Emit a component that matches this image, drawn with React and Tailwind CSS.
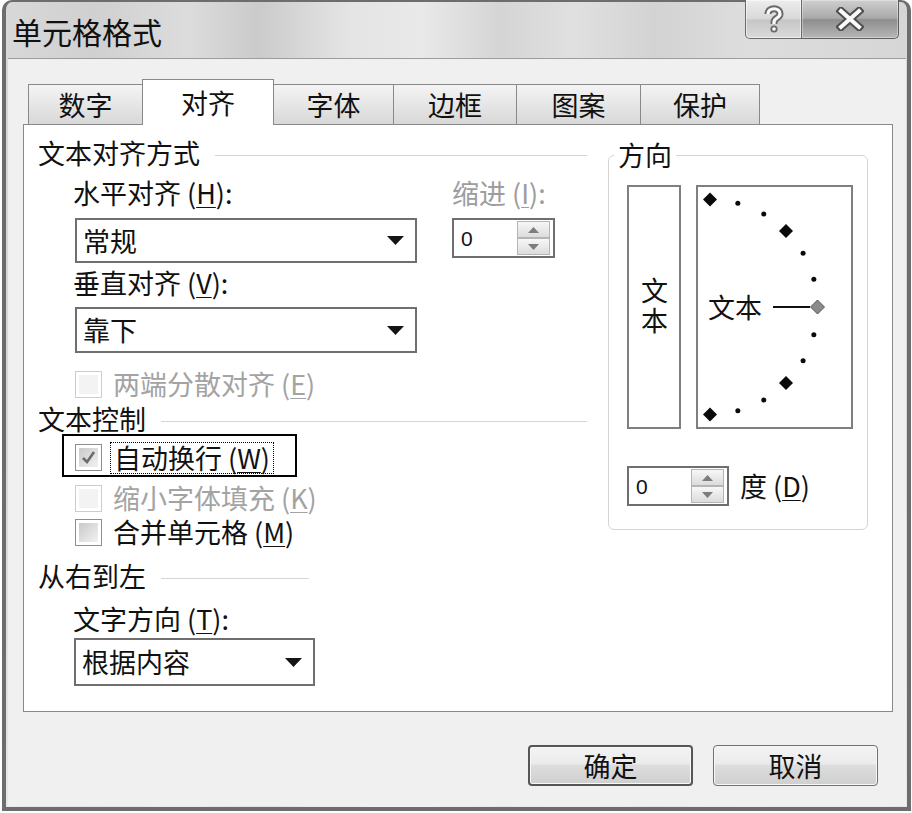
import React from 'react';

const TABS = [
  { label: '数字', w: 'w-[115px]' },
  { label: '对齐', w: 'w-[132px]', active: true },
  { label: '字体', w: 'w-[121px]' },
  { label: '边框', w: 'w-[124px]' },
  { label: '图案', w: 'w-[125px]' },
  { label: '保护', w: 'w-[120px]' },
];

// dial marks: every 15 degrees on a half circle
const CX = 14;
const CY = 122;
const R = 107.5;
const MARKS = [90, 75, 60, 45, 30, 15, 0, -15, -30, -45, -60, -75, -90].map((a) => {
  const rad = (a * Math.PI) / 180;
  return { a, x: CX + R * Math.cos(rad), y: CY - R * Math.sin(rad) };
});

function diamond(x, y, r) {
  return `${x},${y - r} ${x + r},${y} ${x},${y + r} ${x - r},${y}`;
}

function Acc({ k }) {
  return (
    <span className="ml-[6px]">
      (<span className="underline decoration-1 underline-offset-[3px]">{k}</span>)
    </span>
  );
}

function Heading({ text, line }) {
  return (
    <div className="flex h-[30px] items-center">
      <span>{text}</span>
      <span className={`ml-[15px] mt-[4px] h-px bg-[#d5d5d5] ${line}`} />
    </div>
  );
}

function Combo({ className, value }) {
  return (
    <div className={`flex items-center justify-between border-2 border-[#6f6f6f] bg-white pl-[6px] pr-[11px] ${className}`}>
      <span>{value}</span>
      <svg width="17" height="9" viewBox="0 0 17 9">
        <path d="M0 0H17L8.5 9Z" fill="#151515" />
      </svg>
    </div>
  );
}

function SpinBtn({ up }) {
  return (
    <div className="flex flex-1 items-center justify-center border border-[#b5b5b5] bg-[linear-gradient(#f7f7f7,#dcdcdc)]">
      <svg width="11" height="6" viewBox="0 0 11 6">
        <path d={up ? 'M0 6H11L5.5 0Z' : 'M0 0H11L5.5 6Z'} fill="#7d7d7d" />
      </svg>
    </div>
  );
}

function Spin({ className }) {
  return (
    <div className={`flex h-[40px] items-center justify-between border-2 border-[#6f6f6f] bg-white pl-[7px] pr-[3px] ${className}`}>
      <span className="font-['Liberation_Sans',sans-serif] text-[21px] leading-none">0</span>
      <div className="flex h-[34px] w-[33px] flex-col">
        <SpinBtn up />
        <SpinBtn />
      </div>
    </div>
  );
}

function Check({ checked, disabled }) {
  return (
    <span
      className={`flex h-[27px] w-[27px] shrink-0 items-center justify-center border bg-white p-[3px] ${
        disabled ? 'border-[#cdcdcd]' : 'border-[#8e8e8e]'
      }`}
    >
      <span
        className={`flex h-full w-full items-center justify-center ${
          disabled ? 'bg-[#f3f3f3]' : 'bg-[linear-gradient(135deg,#c9c9c9,#f2f2f2)]'
        }`}
      >
        {checked && (
          <svg width="17" height="17" viewBox="0 0 17 17">
            <path d="M3 9 L7 13 L14 3" fill="none" stroke="#6c6c6c" strokeWidth="2.6" />
          </svg>
        )}
      </span>
    </span>
  );
}

function App() {
  return (
    <div className="h-[813px] w-[912px] overflow-hidden bg-white font-['Noto_Sans_CJK_SC','Noto_Sans',sans-serif] text-[27px] leading-[30px] text-[#111]">
      {/* WINDOW FRAME */}
      <div className="ml-[2px] flex h-[811px] w-[909px] flex-col rounded-t-[10px] border-[4px] border-t-[2px] border-[#6d6d6d] bg-[linear-gradient(180deg,rgba(255,255,255,0)_55%,rgba(255,255,255,0.4)),linear-gradient(90deg,#d8d8d8,#d0d0d0_10%,#dcdcdc_20%,#cbcbcb_28%,#e4e4e4_38%,#e9e9e9_46%,#d5d5d5_55%,#e0e0e0_63%,#d3d3d3_72%,#dddddd_82%,#d6d6d6)]">
        {/* TITLE BAR */}
        <div className="flex h-[56px] shrink-0 items-start justify-between">
          <div className="pl-[6px] pt-[11px] text-[30px] leading-[36px]">单元格格式</div>
          <div className="mr-[8px] -mt-[2px] flex h-[39px]">
            <div className="flex w-[57px] items-center justify-center rounded-bl-[5px] border border-t-0 border-[#6a6a6a] bg-[linear-gradient(#ededed,#d8d8d8_50%,#c6c6c6_52%,#dadada)] shadow-[inset_0_0_0_1px_rgba(255,255,255,0.55)]">
              <svg width="22" height="28" viewBox="0 0 22 28">
                <path d="M5 9 C5 2 17 2 17 9 C17 13 11 13 11 17 V19" fill="none" stroke="#6a6a6a" strokeWidth="7" />
                <circle cx="11" cy="24" r="3.6" fill="#6a6a6a" />
                <path d="M5 9 C5 2 17 2 17 9 C17 13 11 13 11 17 V19" fill="none" stroke="#fafafa" strokeWidth="3.2" />
                <circle cx="11" cy="24" r="1.8" fill="#fafafa" />
              </svg>
            </div>
            <div className="flex w-[97px] items-center justify-center rounded-br-[5px] border border-l-0 border-t-0 border-[#5e5e5e] bg-[linear-gradient(#cfcfcf,#a9a9a9_48%,#8e8e8e_52%,#b6b6b6)] shadow-[inset_0_0_0_1px_rgba(255,255,255,0.35)]">
              <svg width="28" height="24" viewBox="0 0 28 24">
                <path d="M5 4 L23 20 M23 4 L5 20" stroke="#4f4f4f" strokeWidth="8" strokeLinecap="square" />
                <path d="M5 4 L23 20 M23 4 L5 20" stroke="#fafafa" strokeWidth="4" strokeLinecap="square" />
              </svg>
            </div>
          </div>
        </div>

        {/* DIALOG BODY */}
        <div className="mb-[1px] ml-[2px] mr-[1px] flex flex-1 flex-col border-t border-[#9c9c9c] bg-[#f0f0f0] pl-[15px] pr-[13px] pt-[20px]">
          {/* TABS */}
          <div className="flex h-[45px] items-end pl-[6px]">
            {TABS.map((t) =>
              t.active ? (
                <div
                  key={t.label}
                  className={`relative z-10 -mb-px -ml-px flex h-[46px] items-center justify-center border border-b-0 border-[#898989] bg-white ${t.w}`}
                >
                  {t.label}
                </div>
              ) : (
                <div
                  key={t.label}
                  className={`-ml-px flex h-[40px] items-center justify-center border border-b-0 border-[#898989] bg-[linear-gradient(#f4f4f4,#e6e6e6_50%,#d8d8d8)] ${t.w}`}
                >
                  {t.label}
                </div>
              )
            )}
          </div>

          {/* TAB PANEL */}
          <div className="flex h-[588px] border border-[#898989] bg-white pl-[14px] pt-[13px]">
            {/* left column */}
            <div className="flex w-[549px] flex-col">
              <Heading text="文本对齐方式" line="flex-1" />
              <div className="mt-[10px] flex h-[30px] items-center">
                <span className="ml-[35px] w-[379px]">
                  水平对齐<Acc k="H" />:
                </span>
                <span className="text-[#9d9d9d]">
                  缩进<Acc k="I" />:
                </span>
              </div>
              <div className="mt-[10px] flex items-start">
                <Combo className="ml-[37px] h-[45px] w-[342px]" value="常规" />
                <Spin className="ml-[35px] w-[103px]" />
              </div>
              <div className="mt-[5px] flex h-[30px] items-center">
                <span className="ml-[35px]">
                  垂直对齐<Acc k="V" />:
                </span>
              </div>
              <Combo className="ml-[37px] mt-[9px] h-[46px] w-[342px]" value="靠下" />
              <div className="mt-[16px] flex h-[30px] items-center pl-[37px] text-[#a3a3a3]">
                <Check disabled />
                <span className="ml-[11px]">
                  两端分散对齐<Acc k="E" />
                </span>
              </div>

              <div className="mt-[5px]">
                <Heading text="文本控制" line="flex-1" />
              </div>
              <div className="ml-[24px] flex h-[43px] w-[235px] items-center border-2 border-black pl-[11px] pt-[4px]">
                <Check checked />
                <span className="ml-[8px] h-[32px] border border-dotted border-black px-[3px] leading-[30px]">
                  自动换行<Acc k="W" />
                </span>
              </div>
              <div className="mt-[6px] flex h-[30px] items-center pl-[37px] text-[#a3a3a3]">
                <Check disabled />
                <span className="ml-[11px]">
                  缩小字体填充<Acc k="K" />
                </span>
              </div>
              <div className="mt-[4px] flex h-[30px] items-center pl-[37px]">
                <Check />
                <span className="ml-[11px]">
                  合并单元格<Acc k="M" />
                </span>
              </div>

              <div className="mt-[14px]">
                <Heading text="从右到左" line="w-[148px]" />
              </div>
              <div className="mt-[13px] flex h-[30px] items-center">
                <span className="ml-[35px]">
                  文字方向<Acc k="T" />:
                </span>
              </div>
              <Combo className="ml-[36px] mt-[4px] h-[48px] w-[241px]" value="根据内容" />
            </div>

            {/* orientation group */}
            <fieldset className="ml-[21px] mt-[2px] h-[390px] w-[260px] rounded-[6px] border border-[#d4d4d4]">
              <legend className="ml-[5px] px-[4px] leading-[30px]">方向</legend>
              <div className="mt-[15px] pl-[18px]">
                <div className="flex gap-[15px]">
                  <div className="flex h-[244px] w-[54px] items-center justify-center border-2 border-[#7f7f7f]">
                    <span className="tracking-[3px] [text-orientation:upright] [writing-mode:vertical-rl]">文本</span>
                  </div>
                  <div className="relative flex h-[244px] w-[157px] items-center border-2 border-[#7f7f7f] pl-[10px]">
                    <span>文本</span>
                    <svg className="absolute -left-[2px] -top-[2px]" width="157" height="244" viewBox="0 0 157 244">
                      <line x1="77" y1={CY} x2="114" y2={CY} stroke="#111" strokeWidth="2" />
                      {MARKS.map((m) =>
                        m.a === 0 ? (
                          <polygon key={m.a} points={diamond(m.x, m.y, 7)} fill="#8a8a8a" stroke="#555" strokeWidth="1" />
                        ) : Math.abs(m.a) === 90 || Math.abs(m.a) === 45 ? (
                          <polygon key={m.a} points={diamond(m.x, m.y, 7)} fill="#0a0a0a" />
                        ) : (
                          <circle key={m.a} cx={m.x} cy={m.y} r="2.5" fill="#0a0a0a" />
                        )
                      )}
                    </svg>
                  </div>
                </div>
                <div className="mt-[37px] flex items-center">
                  <Spin className="w-[102px]" />
                  <span className="ml-[11px]">
                    度<Acc k="D" />
                  </span>
                </div>
              </div>
            </fieldset>
          </div>

          {/* BUTTONS */}
          <div className="mt-[33px] flex justify-end gap-[20px] pr-[15px]">
            <button className="h-[41px] w-[165px] rounded-[4px] border-2 border-[#565656] bg-[linear-gradient(#f3f3f3,#ebebeb_45%,#dddddd_50%,#cfcfcf)] leading-none shadow-[inset_0_0_0_1px_#f8f8f8]">
              确定
            </button>
            <button className="h-[41px] w-[165px] rounded-[4px] border border-[#707070] bg-[linear-gradient(#f3f3f3,#ebebeb_45%,#dddddd_50%,#cfcfcf)] leading-none shadow-[inset_0_0_0_1px_#f8f8f8]">
              取消
            </button>
          </div>
        </div>
      </div>
    </div>
  );
}

export default App;
